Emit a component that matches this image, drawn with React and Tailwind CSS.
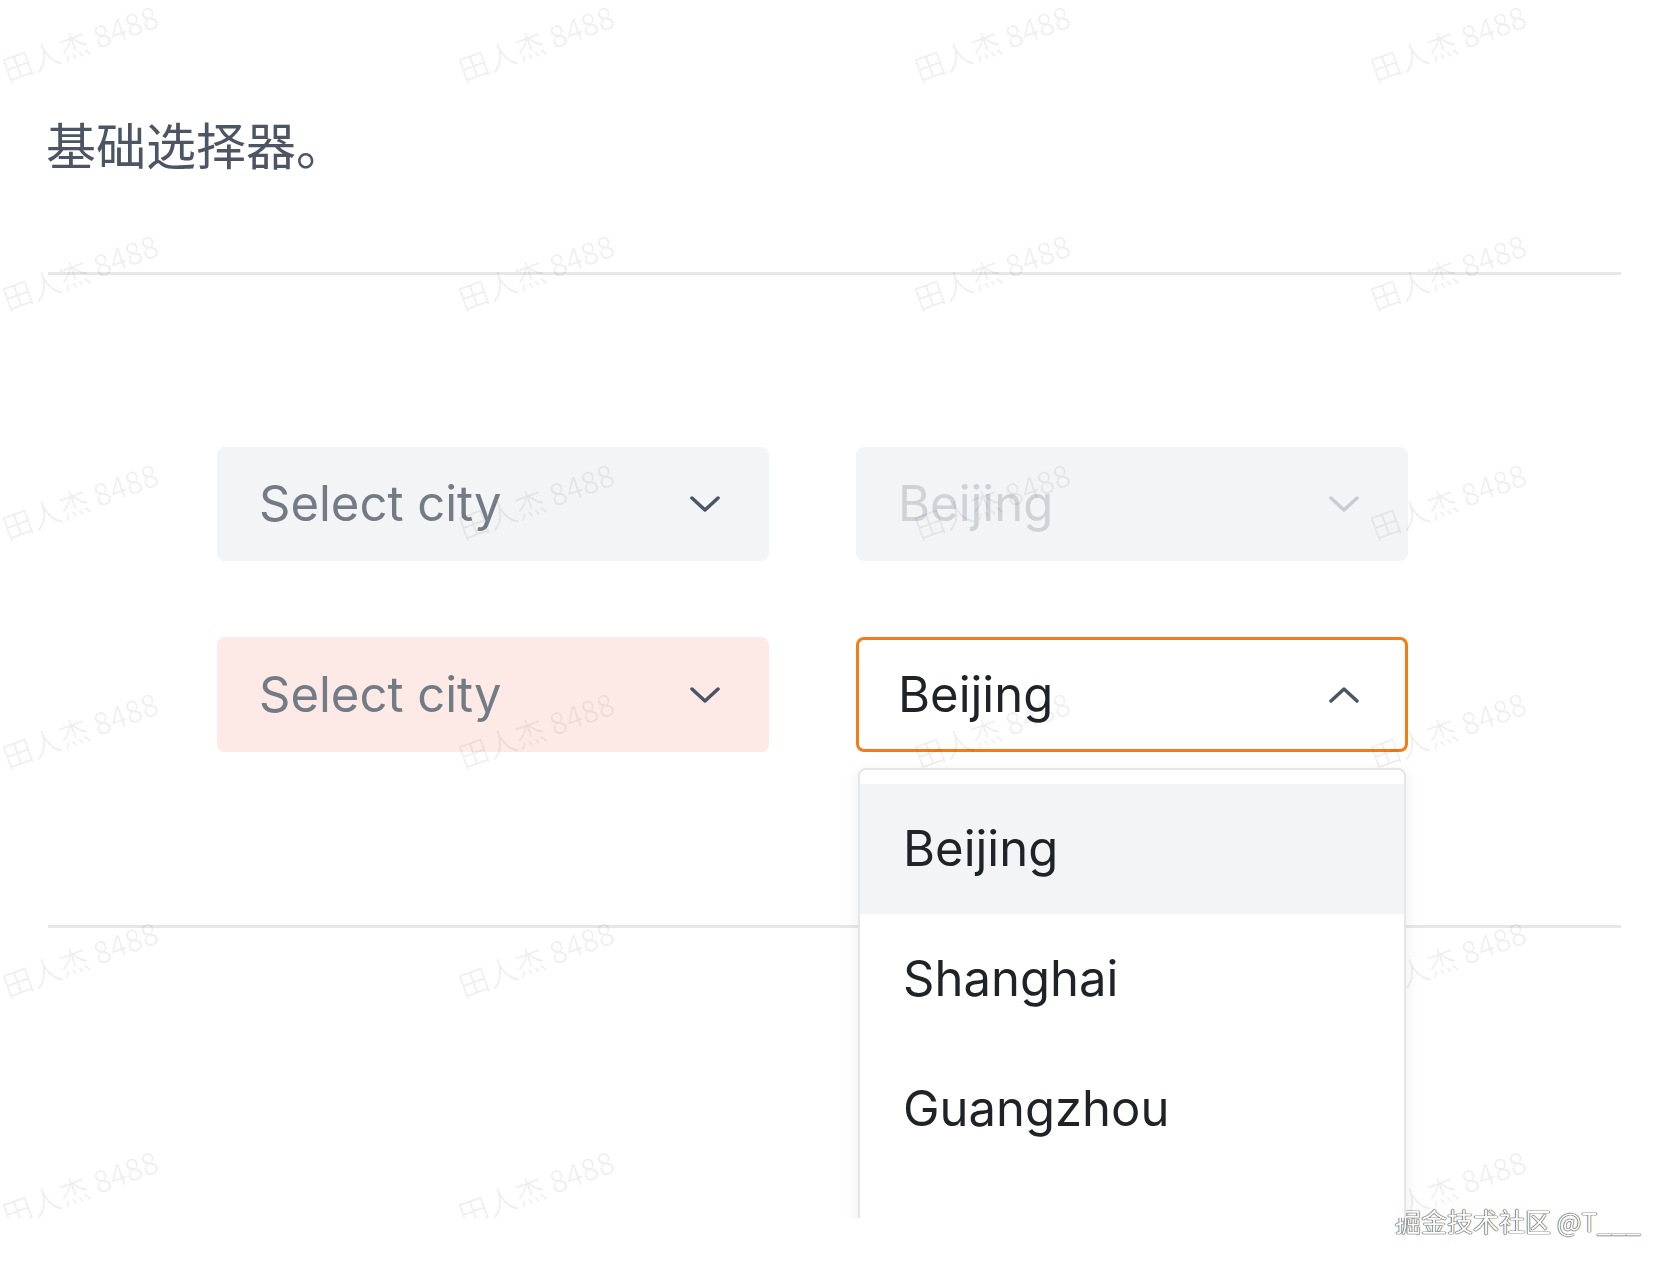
import React from "react";

const cities = ["Beijing", "Shanghai", "Guangzhou", "Shenzhen"];

const Chevron = ({ up = false, color = "#4b5563" }) => (
  <svg width="30" height="16" viewBox="0 0 30 16" fill="none">
    <polyline
      points={up ? "2,14 15,2 28,14" : "2,2 15,14 28,2"}
      stroke={color}
      strokeWidth="3.5"
      strokeLinecap="round"
      strokeLinejoin="round"
    />
  </svg>
);

const Watermarks = () => {
  const cols = [3, 459, 915, 1371];
  const rows = [0, 229, 458, 687, 916, 1145];
  return (
    <div className="pointer-events-none absolute inset-0">
      {rows.map((y) =>
        cols.map((x) => (
          <span
            key={`${x}-${y}`}
            className="absolute whitespace-nowrap text-[30px] leading-none text-black/[0.06] -rotate-[20deg] origin-left font-['Noto_Sans_CJK_SC',sans-serif]"
            style={{ left: x, top: y + 55 }}
          >
            田人杰 8488
          </span>
        ))
      )}
    </div>
  );
};

export default function App() {
  return (
    <div className="relative w-[1670px] h-[1268px] overflow-hidden bg-white font-['Inter','Noto_Sans_CJK_SC',sans-serif]">
      <div className="relative h-[1218px] overflow-hidden">
        <div className="px-[46px] pt-[118px]">
          <h1 className="text-[50px] leading-none text-[#4b5563] font-['Noto_Sans_CJK_SC',sans-serif]">
            基础选择器。
          </h1>
          <div className="mt-[104px] ml-[2px] mr-[3px] h-[3px] bg-[#e6e7ea]" />

          <div className="pl-[171px] pt-[172px]">
            <div className="grid grid-cols-[552px_552px] gap-x-[87px] gap-y-[76px]">
              <div className="flex h-[114px] items-center justify-between rounded-[8px] bg-[#f2f4f6] pl-[42px] pr-[49px] text-[49px] text-[#737b84]">
                <span>Select city</span>
                <Chevron />
              </div>
              <div className="flex h-[114px] items-center justify-between rounded-[8px] bg-[#f3f4f6] pl-[42px] pr-[49px] text-[49px] text-[#cfd2d7]">
                <span>Beijing</span>
                <Chevron color="#c9cdd3" />
              </div>
              <div className="flex h-[115px] items-center justify-between rounded-[8px] bg-[#fdeae7] pl-[42px] pr-[49px] text-[49px] text-[#737b84]">
                <span>Select city</span>
                <Chevron />
              </div>
              <div className="relative">
                <div className="flex h-[115px] items-center justify-between rounded-[8px] border-[3px] border-[#f57c12] bg-white pl-[39px] pr-[46px] text-[49px] text-[#1f2328]">
                  <span>Beijing</span>
                  <Chevron up />
                </div>
                <div className="absolute left-[2px] right-[2px] top-[131px] z-10 rounded-[8px] border-2 border-[#e4e6e9] bg-white pt-[14px] shadow-[0_4px_16px_rgba(0,0,0,0.08)]">
                  {cities.map((c, i) => (
                    <div
                      key={c}
                      className={`flex h-[130px] items-center pl-[43px] text-[49px] text-[#1f2328] ${
                        i === 0 ? "bg-[#f3f4f6]" : ""
                      }`}
                    >
                      {c}
                    </div>
                  ))}
                </div>
              </div>
            </div>
          </div>

          <div className="mt-[173px] ml-[2px] mr-[3px] h-[3px] bg-[#e6e7ea]" />
        </div>
        <Watermarks />
      </div>

      <div className="absolute left-[1395px] top-[1208px] whitespace-nowrap text-[26px] leading-none text-white font-['Noto_Sans_CJK_SC',sans-serif] [text-shadow:0_0_1px_#333,0_0_1px_#333,0_0_1px_#333]">
        掘金技术社区 @T___
      </div>
    </div>
  );
}
